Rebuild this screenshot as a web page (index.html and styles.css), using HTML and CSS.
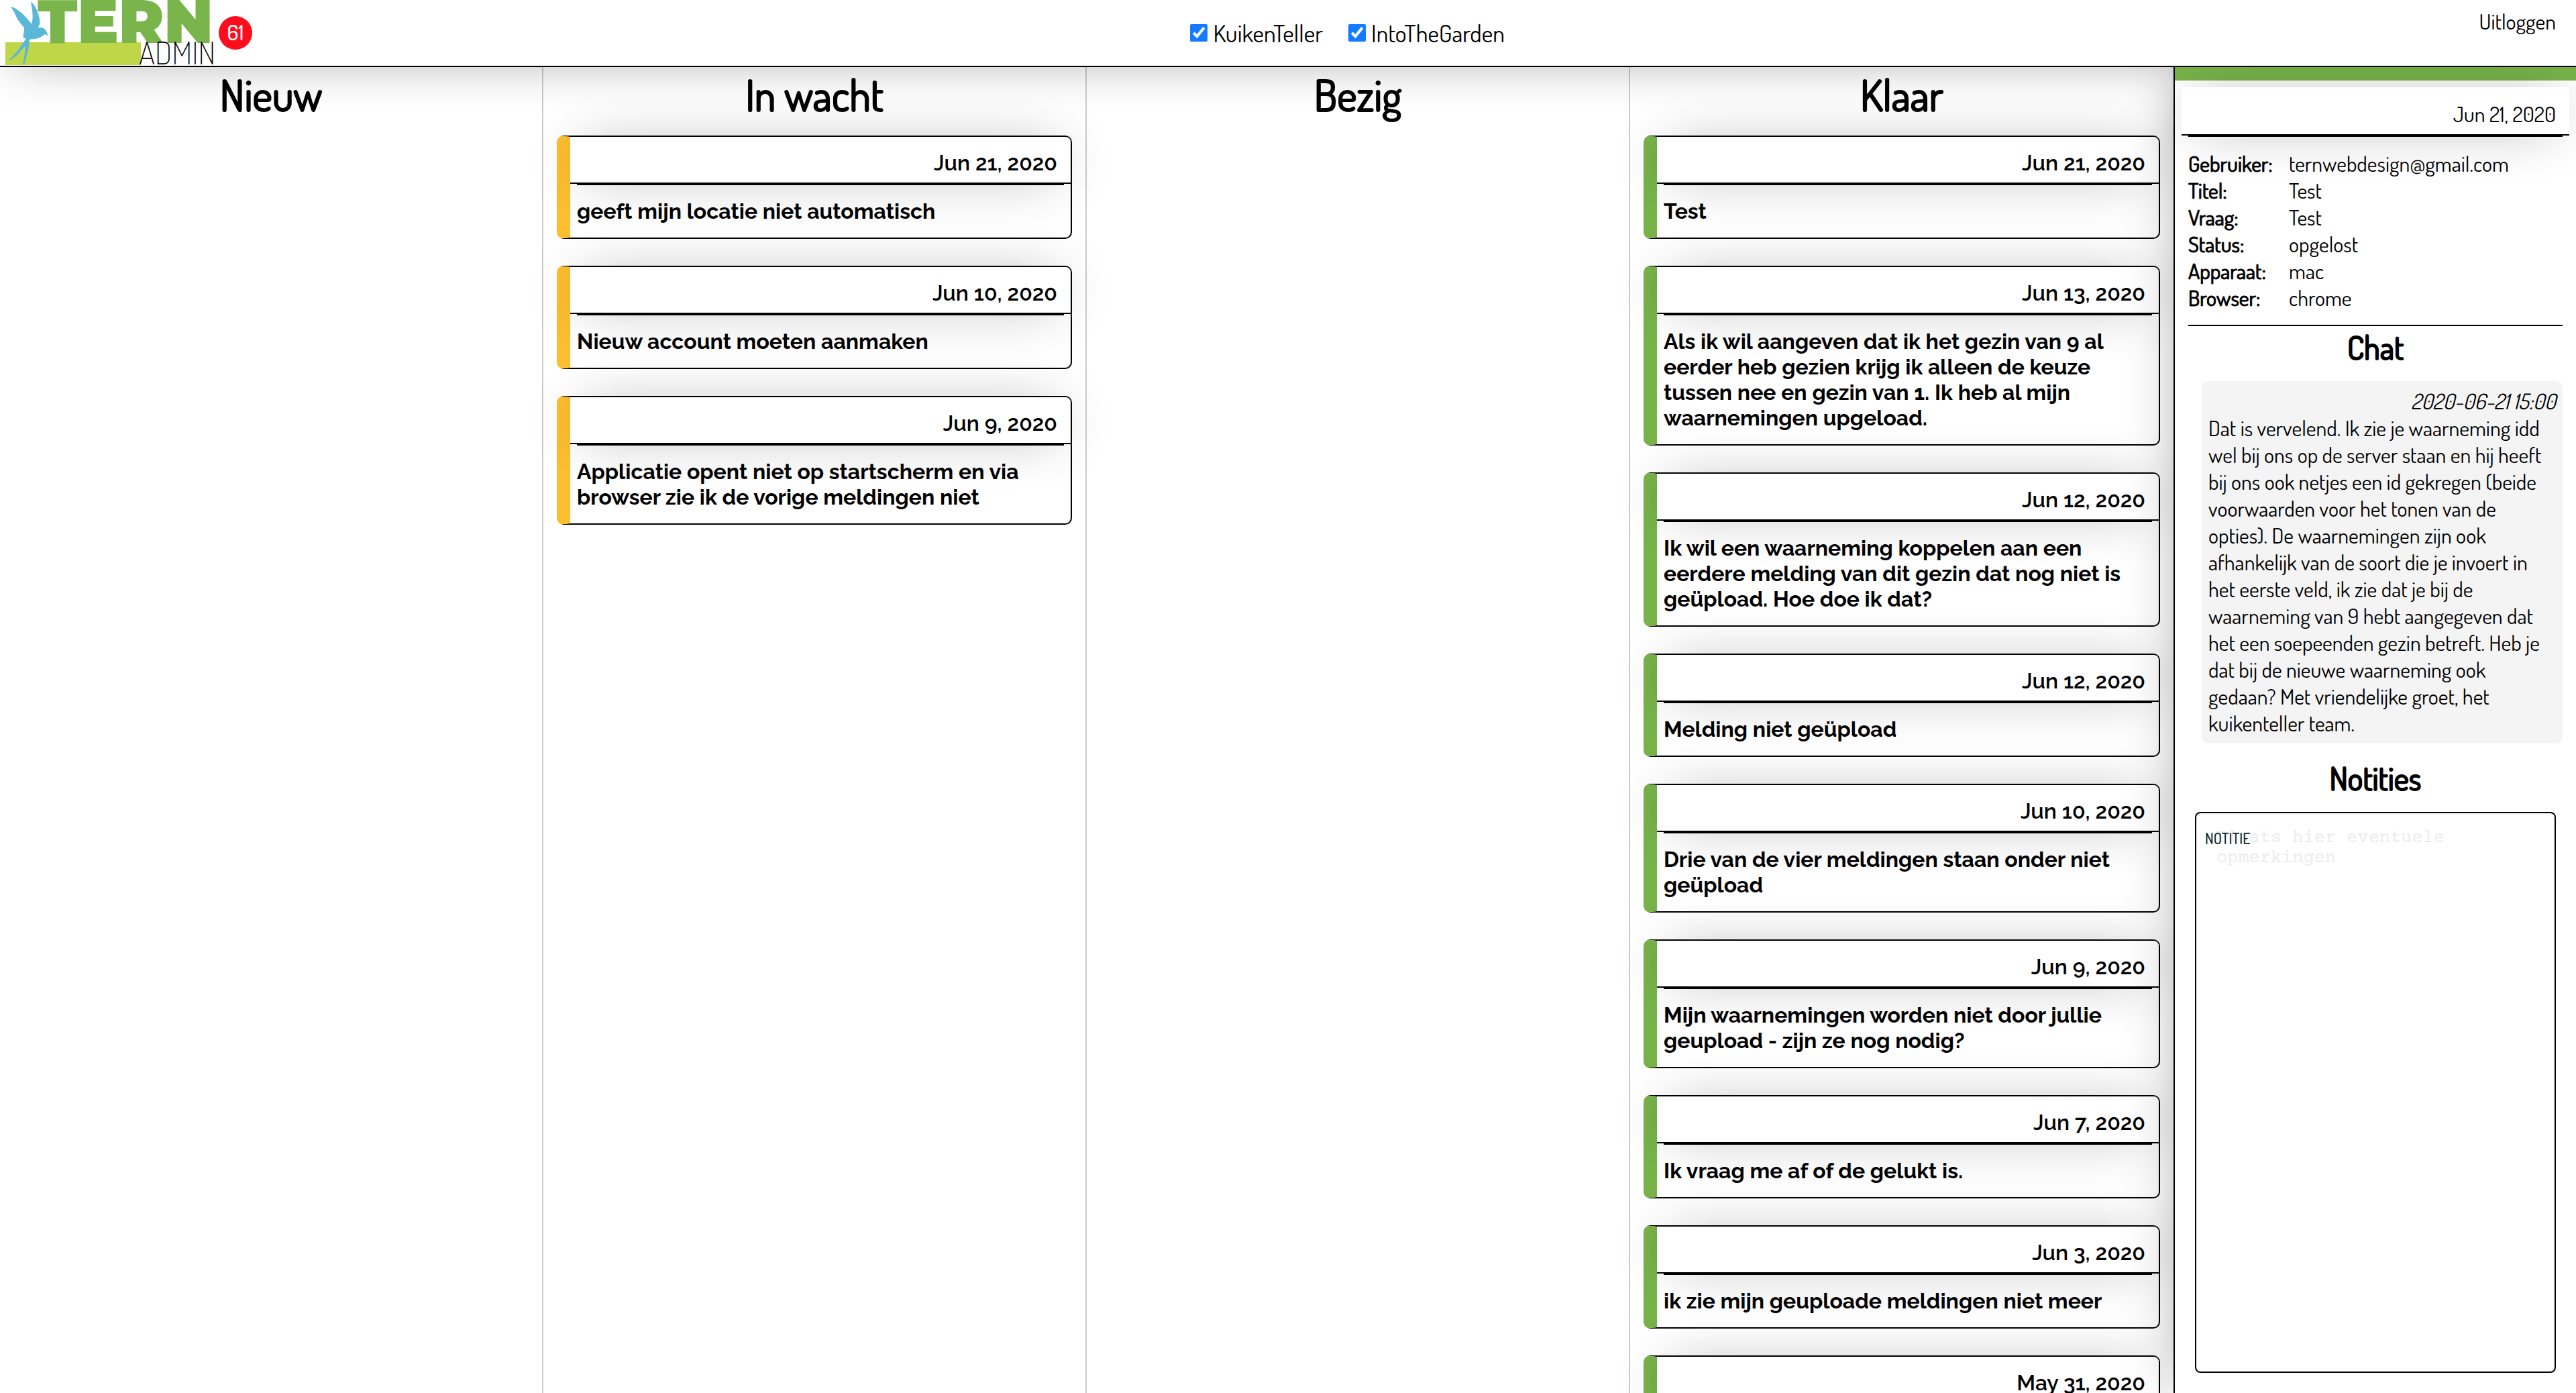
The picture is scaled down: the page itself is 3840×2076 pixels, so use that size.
FILE: index.html
```html
<!DOCTYPE html>
<html lang="nl">
<head>
<meta charset="utf-8">
<title>Tern Admin</title>
<link rel="stylesheet" href="styles.css">
</head>
<body>
<header class="topbar">
  <div class="brand">
    <svg class="logo" viewBox="0 0 318 98" role="img" aria-label="Tern Admin">
      <rect x="8" y="63" width="202" height="34" fill="#bfd648"/>
      <text class="logo-tern" x="56" y="64">TERN</text>
      <text class="logo-admin" x="207" y="96">ADMIN</text>
      <path transform="scale(.3333)" fill="#5bb7d8" d="M48 30C62 32 78 42 92 54C110 70 128 88 140 107C150 90 146 50 138 7C156 22 166 44 172 66C180 90 182 108 169 124C182 121 194 124 202 132C210 142 210 152 220 164C212 160 208 153 200 153C188 166 162 176 132 176C133 210 118 252 109 287L102 287C108 262 113 230 112 207C102 216 96 224 88 234C74 250 60 260 42 270L40 267C62 250 80 226 94 204C102 193 110 184 116 172L104 170C104 156 108 142 108 123C88 104 76 84 68 64C62 50 54 40 48 30Z"/>
    </svg>
    <span class="badge">61</span>
  </div>
  <div class="filters">
    <label class="filter"><input type="checkbox" checked>KuikenTeller</label>
    <label class="filter"><input type="checkbox" checked>IntoTheGarden</label>
  </div>
  <a class="logout" href="#">Uitloggen</a>
</header>
<div class="workspace">
  <main class="board">
    <section class="column">
      <h1>Nieuw</h1>
    </section>
    <section class="column">
      <h1>In wacht</h1>
      <article class="card waiting"><div class="date">Jun 21, 2020</div><hr><p>geeft mijn locatie niet automatisch</p></article>
      <article class="card waiting"><div class="date">Jun 10, 2020</div><hr><p>Nieuw account moeten aanmaken</p></article>
      <article class="card waiting"><div class="date">Jun 9, 2020</div><hr><p>Applicatie opent niet op startscherm en via browser zie ik de vorige meldingen niet</p></article>
    </section>
    <section class="column">
      <h1>Bezig</h1>
    </section>
    <section class="column">
      <h1>Klaar</h1>
      <article class="card done"><div class="date">Jun 21, 2020</div><hr><p>Test</p></article>
      <article class="card done"><div class="date">Jun 13, 2020</div><hr><p>Als ik wil aangeven dat ik het gezin van 9 al eerder heb gezien krijg ik alleen de keuze tussen nee en gezin van 1. Ik heb al mijn waarnemingen upgeload.</p></article>
      <article class="card done"><div class="date">Jun 12, 2020</div><hr><p>Ik wil een waarneming koppelen aan een eerdere melding van dit gezin dat nog niet is geüpload. Hoe doe ik dat?</p></article>
      <article class="card done"><div class="date">Jun 12, 2020</div><hr><p>Melding niet geüpload</p></article>
      <article class="card done"><div class="date">Jun 10, 2020</div><hr><p>Drie van de vier meldingen staan onder niet geüpload</p></article>
      <article class="card done"><div class="date">Jun 9, 2020</div><hr><p>Mijn waarnemingen worden niet door jullie geupload - zijn ze nog nodig?</p></article>
      <article class="card done"><div class="date">Jun 7, 2020</div><hr><p>Ik vraag me af of de gelukt is.</p></article>
      <article class="card done"><div class="date">Jun 3, 2020</div><hr><p>ik zie mijn geuploade meldingen niet meer</p></article>
      <article class="card done"><div class="date">May 31, 2020</div><hr></article>
    </section>
  </main>
  <aside class="panel">
    <div class="date">Jun 21, 2020</div>
    <hr>
    <dl class="facts">
      <dt>Gebruiker:</dt><dd>ternwebdesign@gmail.com</dd>
      <dt>Titel:</dt><dd>Test</dd>
      <dt>Vraag:</dt><dd>Test</dd>
      <dt>Status:</dt><dd>opgelost</dd>
      <dt>Apparaat:</dt><dd>mac</dd>
      <dt>Browser:</dt><dd>chrome</dd>
    </dl>
    <hr>
    <h2>Chat</h2>
    <div class="message">
      <time>2020-06-21 15:00</time>
      <p>Dat is vervelend. Ik zie je waarneming idd wel bij ons op de server staan en hij heeft bij ons ook netjes een id gekregen (beide voorwaarden voor het tonen van de opties). De waarnemingen zijn ook afhankelijk van de soort die je invoert in het eerste veld, ik zie dat je bij de waarneming van 9 hebt aangegeven dat het een soepeenden gezin betreft. Heb je dat bij de nieuwe waarneming ook gedaan? Met vriendelijke groet, het kuikenteller team.</p>
    </div>
    <h2>Notities</h2>
    <div class="note">
      <label for="note">NOTITIE</label>
      <textarea id="note" placeholder="Plaats hier eventuele opmerkingen"></textarea>
    </div>
  </aside>
</div>
</body>
</html>
```
FILE: styles.css
```css
:root {
  --green: #78b34a;
  --amber: #fdbf2f;
  --float: 0 0 80px -20px rgba(0, 0, 0, .46);
}
* { box-sizing: border-box; }
body {
  margin: 0;
  height: 100vh;
  display: flex;
  flex-direction: column;
  font: 400 32px/40px Dosis, "Roboto Condensed", Lato, sans-serif;
  color: #000;
  background: #fff;
}
h1, h2, p, dl, dd { margin: 0; }
h1, h2 { font-weight: 400; -webkit-text-stroke: 2px #000; }
hr {
  margin: 0 10px;
  border: 0;
  height: 2px;
  background: #000;
  flex: none;
}

.topbar {
  position: relative;
  z-index: 1;
  flex: none;
  height: 100px;
  display: flex;
  justify-content: space-between;
  align-items: center;
  border-bottom: 2px solid #000;
  background: #fff;
  box-shadow: var(--float);
}
.brand { display: flex; align-items: center; gap: 8px; }
.logo { display: block; width: 318px; height: 98px; overflow: visible; }
.logo-tern { font: 900 91px Montserrat, Inter, sans-serif; fill: #79b54b; }
.logo-admin { font: 200 46px Dosis, Lato, sans-serif; fill: #000; }
.badge {
  width: 50px;
  height: 50px;
  border-radius: 50%;
  background: #ff0d1c;
  color: #fff;
  line-height: 48px;
  text-align: center;
  font-weight: 500;
}
.filters { display: flex; gap: 38px; margin-right: 24px; }
.filter { display: flex; align-items: center; gap: 8px; font-size: 36px; }
.filter input { width: 26px; height: 26px; margin: 0; accent-color: #147aff; }
.logout {
  align-self: flex-start;
  padding: 12px 30px 0;
  color: inherit;
  text-decoration: none;
}

.workspace {
  flex: 1;
  min-height: 0;
  display: flex;
  overflow: hidden;
}
.board {
  flex: 1;
  display: grid;
  grid-template-columns: repeat(4, 1fr);
  overflow: auto;
  scrollbar-width: none;
}
.column {
  display: flex;
  flex-direction: column;
  gap: 40px;
  padding: 0 20px 40px;
  border-right: 2px solid #ccc;
}
.column:last-child { border-right: 0; }
.column h1 {
  margin-bottom: -20px;
  font-size: 64px;
  line-height: 82px;
  text-align: center;
}
.card {
  border: 2px solid #000;
  border-left-width: 20px;
  border-radius: 10px;
  font-family: Raleway, Inter, sans-serif;
  font-weight: 700;
  line-height: 38px;
}
.card.waiting { border-left-color: var(--amber); }
.card.done { border-left-color: var(--green); }
.date {
  padding: 20px 20px 10px;
  border-bottom: 2px solid #000;
  background: #fff;
  box-shadow: var(--float);
  text-align: right;
}
.card .date { border-radius: 0 8px 0 0; font-weight: 600; }
.card p { padding: 20px 10px; }

.panel {
  position: relative;
  z-index: 2;
  flex: 0 0 600px;
  display: flex;
  flex-direction: column;
  padding: 10px 10px 30px;
  border-left: 2px solid #000;
  background: linear-gradient(var(--green) 20px, #fff 20px);
  padding-top: 30px;
  box-shadow: var(--float);
}
.facts {
  display: grid;
  grid-template-columns: 150px 1fr;
  padding: 20px 10px;
}
.facts dt { -webkit-text-stroke: 1px #000; }
.panel h2 {
  margin-bottom: 20px;
  font-size: 48px;
  line-height: 62px;
  text-align: center;
}
.message {
  margin: 0 10px 20px 30px;
  padding: 10px;
  border-radius: 10px;
  background: #f4f4f4;
}
.message time { display: block; text-align: right; font-style: italic; }
.note {
  position: relative;
  flex: 1;
  display: flex;
  margin: 0 20px;
}
.note label {
  position: absolute;
  top: 24px;
  left: 15px;
  font-size: 22px;
  line-height: 30px;
  font-weight: 500;
  color: #06282e;
}
.note textarea {
  flex: 1;
  padding: 22px 30px;
  border: 2px solid #000;
  border-radius: 8px;
  background: #fff;
  resize: none;
  font: 27px/30px "Courier Prime", "Courier New", "Liberation Mono", monospace;
}
.note textarea::placeholder { color: #ececec; }
```
